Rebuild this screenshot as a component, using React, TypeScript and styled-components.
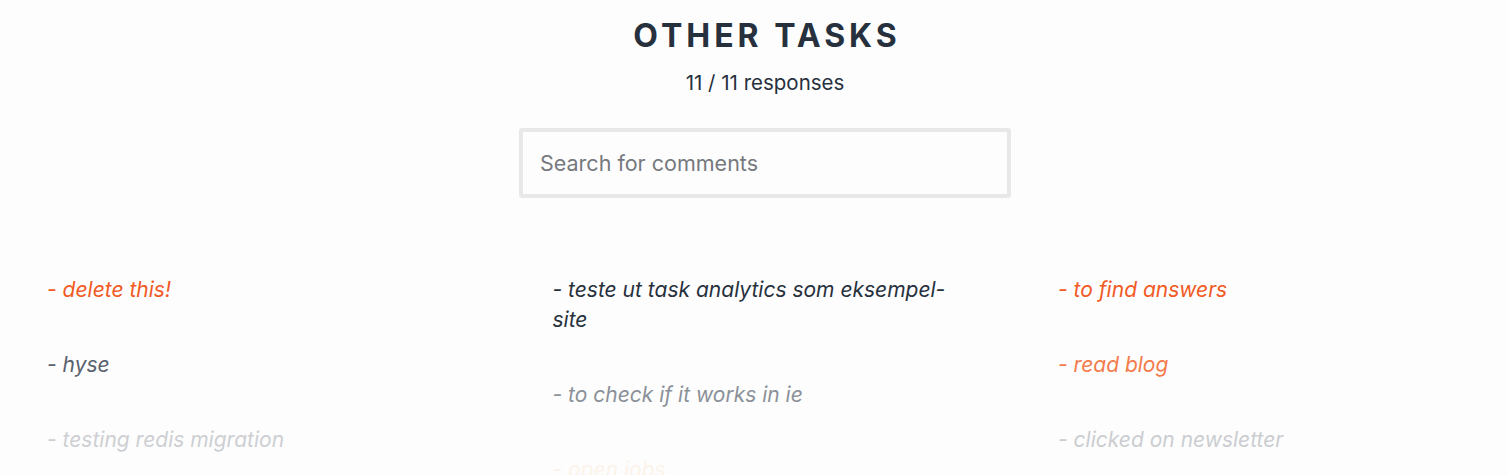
import React from "react";
import styled, { createGlobalStyle } from "styled-components";

const Global = createGlobalStyle`
  html, body { margin: 0; padding: 0; background: #fdfdfd; }
  body { font-family: "Inter", "Noto Sans", sans-serif; }
`;

const Page = styled.div`
  width: 1508px;
  height: 475px;
  overflow: hidden;
  background: #fdfdfd;
  display: flex;
  flex-direction: column;
`;

const Header = styled.header`
  display: flex;
  flex-direction: column;
  align-items: center;
  padding-left: 22px;
`;

const Title = styled.h1`
  margin: 16px 0 0;
  font-size: 32px;
  line-height: 40px;
  font-weight: 700;
  letter-spacing: 4px;
  color: #27313d;
  padding-left: 4px;
`;

const Count = styled.div`
  margin-top: 13px;
  font-size: 20.5px;
  line-height: 28px;
  color: #27313d;
`;

const Search = styled.input`
  margin-top: 31px;
  box-sizing: border-box;
  width: 492px;
  height: 70px;
  border: 4px solid #e8e8e9;
  border-radius: 3px;
  background: #fdfdfd;
  padding: 0 17px;
  font-family: inherit;
  font-size: 21.5px;
  color: #27313d;
  outline: none;
  &::placeholder { color: #76797d; }
`;

const Grid = styled.div`
  margin-top: 77px;
  padding: 0 47px;
  display: grid;
  grid-template-columns: repeat(3, 403px);
  column-gap: 102.5px;
`;

const Column = styled.ul`
  list-style: none;
  margin: 0;
  padding: 0;
  display: flex;
  flex-direction: column;
  gap: 45px;
`;

const Item = styled.li<{ $color: string }>`
  font-size: 21px;
  line-height: 30px;
  font-style: oblique 10deg;
  color: ${(p) => p.$color};
`;

const columns: { text: string; color: string }[][] = [
  [
    { text: "- delete this!", color: "#f15a24" },
    { text: "- hyse", color: "#5a626e" },
    { text: "- testing redis migration", color: "#cdcfd3" },
  ],
  [
    { text: "- teste ut task analytics som eksempel-site", color: "#27313d" },
    { text: "- to check if it works in ie", color: "#8b9199" },
    { text: "- open jobs", color: "#fcf3ea" },
  ],
  [
    { text: "- to find answers", color: "#f15a24" },
    { text: "- read blog", color: "#f47b4b" },
    { text: "- clicked on newsletter", color: "#cbcdd1" },
  ],
];

export default function App() {
  return (
    <Page>
      <Global />
      <Header>
        <Title>OTHER TASKS</Title>
        <Count>11 / 11 responses</Count>
        <Search placeholder="Search for comments" />
      </Header>
      <Grid>
        {columns.map((col, i) => (
          <Column key={i}>
            {col.map((it) => (
              <Item key={it.text} $color={it.color}>
                {it.text}
              </Item>
            ))}
          </Column>
        ))}
      </Grid>
    </Page>
  );
}
